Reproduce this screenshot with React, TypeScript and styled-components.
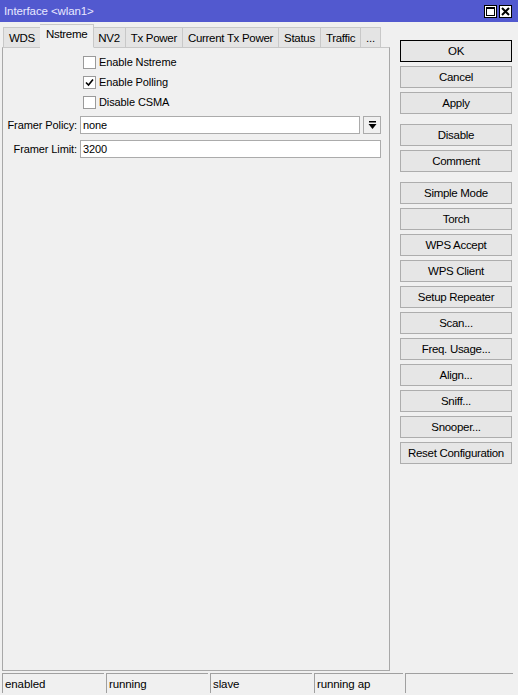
import React from 'react'
import styled, { createGlobalStyle } from 'styled-components'

const GlobalStyle = createGlobalStyle`
  html, body {
    margin: 0;
    padding: 0;
    background: #f0f0f0;
  }
  body {
    font-family: "Liberation Sans", Arial, sans-serif;
    font-size: 11px;
    letter-spacing: -0.1px;
    color: #000;
  }
`

const Window = styled.div`
  width: 518px;
  height: 695px;
  background: #f0f0f0;
  display: flex;
  flex-direction: column;
  box-sizing: border-box;
`

const TitleBar = styled.div`
  height: 22px;
  background: #5259cf;
  display: flex;
  align-items: center;
  justify-content: space-between;
  padding: 0 6px 0 4px;
  color: #e8e8ff;
  flex-shrink: 0;
`

const TitleText = styled.span`
  font-size: 11.5px;
`

const TitleButtons = styled.div`
  display: flex;
  gap: 2px;
`

const TitleButton = styled.div`
  width: 13px;
  height: 13px;
  background: #fff;
  border: 1px solid #000;
  box-sizing: border-box;
  display: flex;
  align-items: center;
  justify-content: center;
`

const Body = styled.div`
  flex: 1;
  display: flex;
  padding: 0 6px 0 2px;
  min-height: 0;
`

const LeftCol = styled.div`
  width: 388px;
  display: flex;
  flex-direction: column;
`

const TabStrip = styled.div`
  display: flex;
  align-items: flex-end;
  height: 25px;
  padding-left: 1px;
`

const Tab = styled.div<{ active?: boolean }>`
  height: ${p => (p.active ? 24 : 21)}px;
  padding: 0 ${p => (p.active ? 6 : 5)}px;
  margin: 0 ${p => (p.active ? -1 : 0)}px;
  position: relative;
  z-index: ${p => (p.active ? 1 : 0)};
  background: ${p => (p.active ? '#f0f0f0' : '#e4e4e4')};
  border: 1px solid #c8c8c8;
  border-bottom: ${p => (p.active ? '1px solid #f0f0f0' : '1px solid #c8c8c8')};
  box-sizing: border-box;
  display: flex;
  align-items: ${p => (p.active ? 'flex-start' : 'center')};
  padding-top: ${p => (p.active ? 3 : 1)}px;
  font-size: 11.5px;
  letter-spacing: -0.3px;
  white-space: nowrap;
  margin-bottom: -1px;
  & + & {
    border-left: none;
  }
`

const Panel = styled.div`
  flex: 1;
  border: 1px solid #a8a8a8;
  border-top-color: #c8c8c8;
  background: #f0f0f0;
  padding-top: 4px;
  display: flex;
  flex-direction: column;
`

const CheckRow = styled.label`
  display: flex;
  align-items: center;
  height: 20px;
  padding-left: 80px;
  gap: 3px;
`

const Box = styled.span`
  width: 13px;
  height: 13px;
  border: 1px solid #9a9a9a;
  background: #fff;
  box-sizing: border-box;
  display: flex;
  align-items: center;
  justify-content: center;
`

const FieldRow = styled.div<{ gap: number }>`
  display: flex;
  align-items: center;
  height: 18px;
  margin-top: ${p => p.gap}px;
  padding-right: 8px;
`

const FieldLabel = styled.span`
  width: 77px;
  text-align: right;
  padding-right: 3px;
  flex-shrink: 0;
  white-space: nowrap;
  box-sizing: border-box;
`

const Input = styled.div`
  flex: 1;
  height: 18px;
  border: 1px solid #ababab;
  background: #fff;
  box-sizing: border-box;
  padding-left: 2px;
  display: flex;
  align-items: center;
`

const DropButton = styled.div`
  width: 18px;
  height: 18px;
  margin-left: 3px;
  border: 1px solid #ababab;
  background: #f0f0f0;
  box-sizing: border-box;
  display: flex;
  align-items: center;
  justify-content: center;
`

const RightCol = styled.div`
  flex: 1;
  display: flex;
  flex-direction: column;
  padding: 18px 0 0 10px;
`

const Group = styled.div`
  display: flex;
  flex-direction: column;
  gap: 4px;
  & + & {
    margin-top: 10px;
  }
`

const Button = styled.div<{ primary?: boolean }>`
  width: 112px;
  height: 22px;
  box-sizing: border-box;
  border: 1px solid ${p => (p.primary ? '#000' : '#adadad')};
  background: #e6e6e6;
  display: flex;
  align-items: center;
  justify-content: center;
  font-size: 11.5px;
  letter-spacing: -0.3px;
`

const StatusBar = styled.div`
  height: 22px;
  display: flex;
  gap: 2px;
  padding: 2px 5px 0 2px;
  flex-shrink: 0;
`

const StatusCell = styled.div<{ w: number }>`
  width: ${p => p.w}px;
  height: 20px;
  border-top: 1px solid #a0a0a0;
  border-left: 1px solid #a0a0a0;
  box-sizing: border-box;
  padding-left: 2px;
  display: flex;
  align-items: center;
  font-size: 11.5px;
`

const tabs = ['WDS', 'Nstreme', 'NV2', 'Tx Power', 'Current Tx Power', 'Status', 'Traffic', '...']

const groups = [
  ['OK', 'Cancel', 'Apply'],
  ['Disable', 'Comment'],
  [
    'Simple Mode',
    'Torch',
    'WPS Accept',
    'WPS Client',
    'Setup Repeater',
    'Scan...',
    'Freq. Usage...',
    'Align...',
    'Sniff...',
    'Snooper...',
    'Reset Configuration',
  ],
]

const checks = [
  { label: 'Enable Nstreme', on: false },
  { label: 'Enable Polling', on: true },
  { label: 'Disable CSMA', on: false },
]

const status = [
  { text: 'enabled', w: 102 },
  { text: 'running', w: 102 },
  { text: 'slave', w: 102 },
  { text: 'running ap', w: 89 },
  { text: '', w: 108 },
]

export default function App() {
  return (
    <>
      <GlobalStyle />
      <Window>
        <TitleBar>
          <TitleText>Interface &lt;wlan1&gt;</TitleText>
          <TitleButtons>
            <TitleButton>
              <svg width="9" height="9" viewBox="0 0 9 9">
                <rect x="0.5" y="0.5" width="8" height="8" fill="none" stroke="#000" />
                <line x1="0" y1="1.5" x2="9" y2="1.5" stroke="#000" />
              </svg>
            </TitleButton>
            <TitleButton>
              <svg width="9" height="9" viewBox="0 0 9 9">
                <path d="M1 1 L8 8 M8 1 L1 8" stroke="#000" strokeWidth="2" />
              </svg>
            </TitleButton>
          </TitleButtons>
        </TitleBar>
        <Body>
          <LeftCol>
            <TabStrip>
              {tabs.map(t => (
                <Tab key={t} active={t === 'Nstreme'}>
                  {t}
                </Tab>
              ))}
            </TabStrip>
            <Panel>
              {checks.map(c => (
                <CheckRow key={c.label}>
                  <Box>
                    {c.on && (
                      <svg width="9" height="9" viewBox="0 0 9 9">
                        <path d="M1 4.5 L3.5 7 L8 1.5" fill="none" stroke="#000" strokeWidth="1.6" />
                      </svg>
                    )}
                  </Box>
                  {c.label}
                </CheckRow>
              ))}
              <FieldRow gap={4}>
                <FieldLabel>Framer Policy:</FieldLabel>
                <Input>none</Input>
                <DropButton>
                  <svg width="9" height="9" viewBox="0 0 9 9">
                    <rect x="1" y="0" width="7" height="1.5" fill="#000" />
                    <path d="M0.5 3 L8.5 3 L4.5 8 Z" fill="#000" />
                  </svg>
                </DropButton>
              </FieldRow>
              <FieldRow gap={6}>
                <FieldLabel>Framer Limit:</FieldLabel>
                <Input>3200</Input>
              </FieldRow>
            </Panel>
          </LeftCol>
          <RightCol>
            {groups.map((g, i) => (
              <Group key={i}>
                {g.map(b => (
                  <Button key={b} primary={b === 'OK'}>
                    {b}
                  </Button>
                ))}
              </Group>
            ))}
          </RightCol>
        </Body>
        <StatusBar>
          {status.map((s, i) => (
            <StatusCell key={i} w={s.w}>
              {s.text}
            </StatusCell>
          ))}
        </StatusBar>
      </Window>
    </>
  )
}
